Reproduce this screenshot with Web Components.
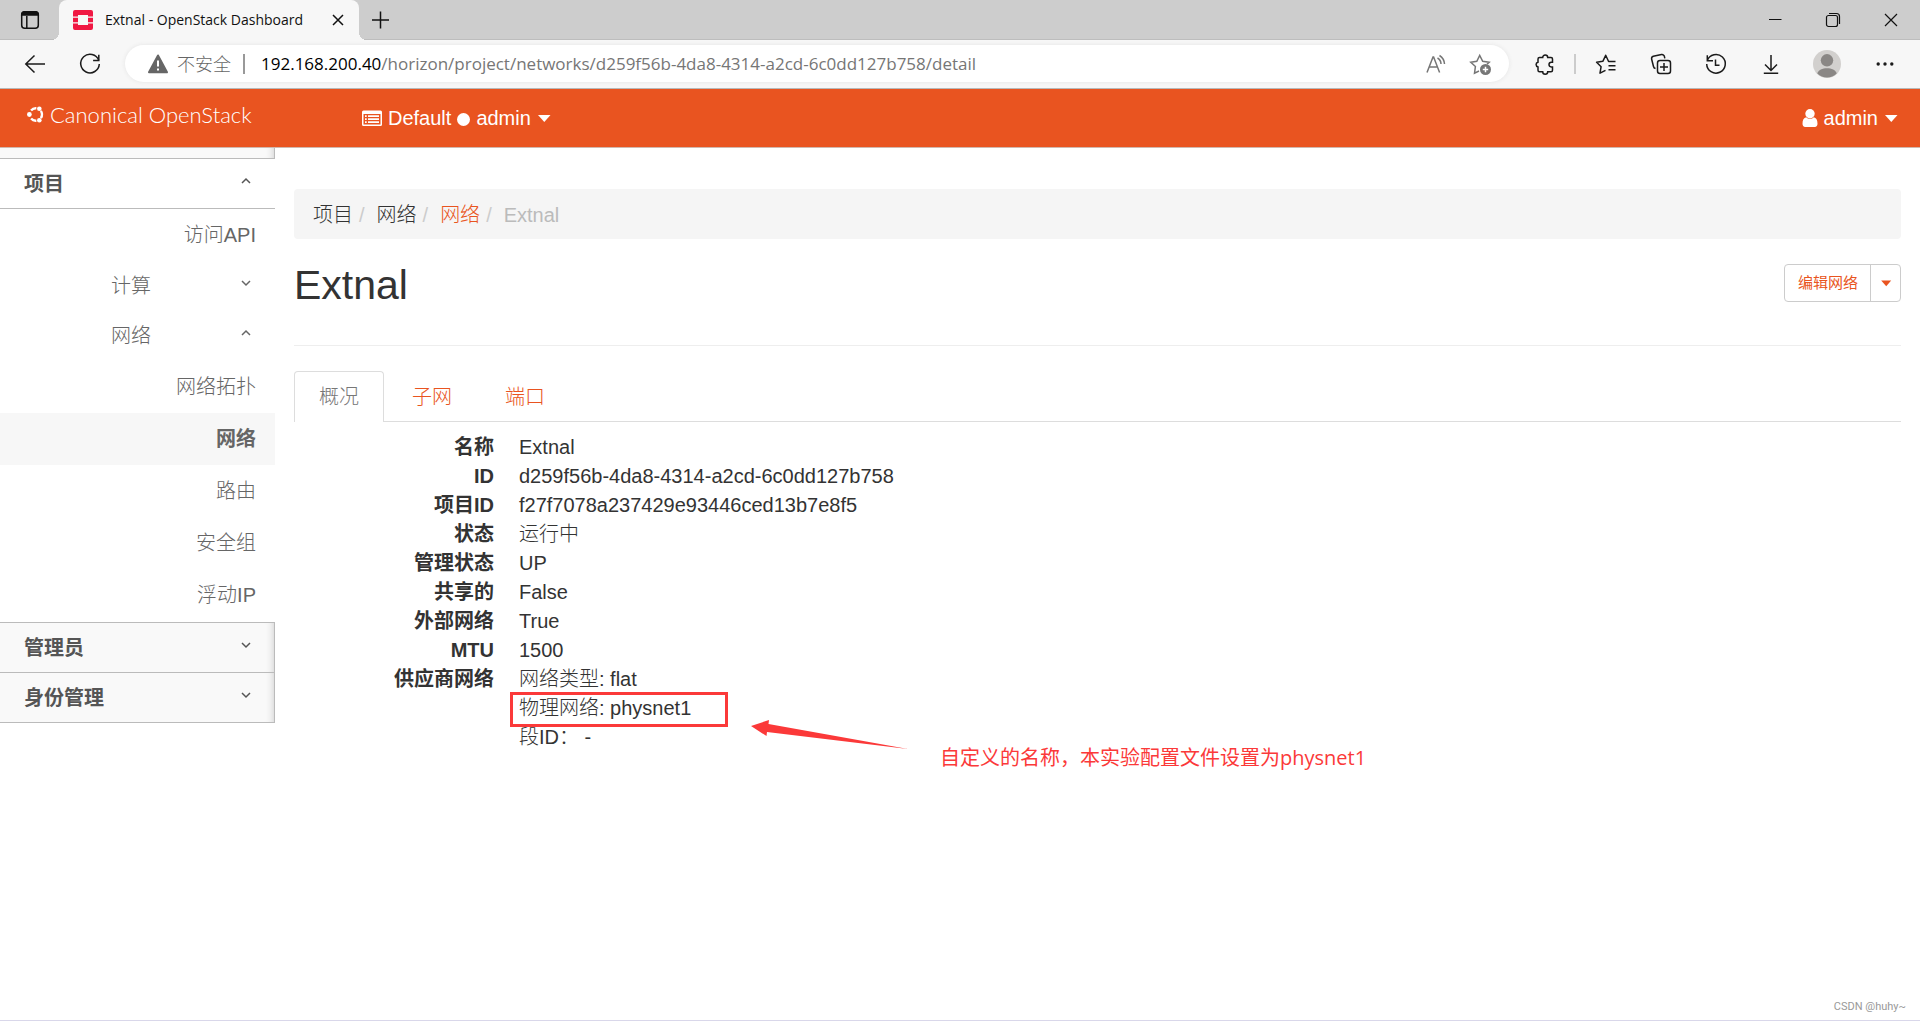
<!DOCTYPE html>
<html lang="zh-CN">
<head>
<meta charset="utf-8">
<title>Extnal - OpenStack Dashboard</title>
<style>
:root{
  --orange:#e95420; --ink:#333; --line:#ddd; --red:#fb3939;
  --body:"Liberation Sans","Noto Sans CJK SC",sans-serif;
  --chrome:"Open Sans","Noto Sans CJK SC",sans-serif;
}
html,body{margin:0;height:100%}
body{background:#fff;color:var(--ink);font:300 20px/29px var(--body)}
</style>
</head>
<body>
<dashboard-window>
  <browser-tabs slot="chrome" label="Extnal - OpenStack Dashboard"></browser-tabs>
  <browser-toolbar slot="chrome" host="192.168.200.40" path="/horizon/project/networks/d259f56b-4da8-4314-a2cd-6c0dd127b758/detail"></browser-toolbar>
  <horizon-header slot="header"></horizon-header>
  <side-nav slot="nav">
    <nav-section label="项目" open>
      <nav-item>访问API</nav-item>
      <nav-group>计算</nav-group>
      <nav-group open>网络</nav-group>
      <nav-item>网络拓扑</nav-item>
      <nav-item active>网络</nav-item>
      <nav-item>路由</nav-item>
      <nav-item>安全组</nav-item>
      <nav-item>浮动IP</nav-item>
    </nav-section>
    <nav-section label="管理员"></nav-section>
    <nav-section label="身份管理" last></nav-section>
  </side-nav>
  <bread-crumb></bread-crumb>
  <page-title name="Extnal" action="编辑网络"></page-title>
  <tab-list></tab-list>
  <network-details></network-details>
  <water-mark slot="mark">CSDN @huhy~</water-mark>
</dashboard-window>

<script>
const base = `<style>
:host,*{box-sizing:border-box}
:host{display:block}
a{color:inherit;text-decoration:none}
button{font:inherit;color:inherit;background:none;border:0;padding:0;margin:0;display:flex;align-items:center;justify-content:center}
svg{display:block;overflow:visible}
</style>`;
const define = (name, render) => customElements.define(name, class extends HTMLElement {
  constructor(){ super(); this.attachShadow({mode:'open'}); }
  connectedCallback(){ this.shadowRoot.innerHTML = base + render(this); }
});

/* Icons: line drawings on a 20 by 20 grid */
const icons = {
  tabs:`<rect x="1.7" y="1.7" width="16.6" height="16.6" rx="3"/><path d="M1.7 5V4.7a3 3 0 0 1 3-3h10.6a3 3 0 0 1 3 3V5z" fill="currentColor"/><path d="M6.8 6v12"/>`,
  close:`<path d="M5 5l10 10M15 5L5 15"/>`,
  plus:`<path d="M10.500 1.5v17M2 10h17"/>`,
  min:`<path d="M4 9.500h12.500"/>`,
  max:`<rect x="3.500" y="5.500" width="11" height="11" rx="2"/><path d="M6 3.500h7.500a3 3 0 0 1 3 3V14"/>`,
  winclose:`<path d="M4 4l12 12M16 4L4 16"/>`,
  back:`<path d="M20 10H.8M9.500 1.500L.8 10l8.700 8.500"/>`,
  reload:`<path d="M18.700 6.200A9.300 9.300 0 1 0 19.300 10"/><path d="M18.800 .8v5.700h-5.700"/>`,
  aloud:`<path d="M1 18.500L7 3h.6l6 15.500M3.200 13h8.300"/><path d="M11.500 4a7 7 0 0 1 3.500 6M13.500 1.500a11 11 0 0 1 5 8.500" />`,
  staradd:`<path d="M9 17l-4.500 2.200.9-6.700L.8 8.300l6-1L9.700 1.500l3 5.800 6.500 1-2.200 2"/><circle cx="15.500" cy="15.500" r="5.500" fill="currentColor" stroke="none"/><path d="M15.500 12.800v5.400M12.800 15.500h5.400" stroke="#fff"/>`,
  puzzle:`<path d="M4.500 3.500h3.200a2.500 2.500 0 0 1 5 0h3.300a1.500 1.500 0 0 1 1.500 1.500v3.300h-1.200a2.300 2.300 0 0 0 0 4.600h1.200v3.300a1.500 1.500 0 0 1-1.500 1.500h-3.300a2.500 2.500 0 0 1-5 0H4.500A1.500 1.500 0 0 1 3 16.200v-3.300a2.400 2.400 0 0 1 0-4.700V5a1.500 1.500 0 0 1 1.500-1.500z"/>`,
  starlist:`<path d="M19.500 7.500H12.600L9.700 1.300 6.800 7.300.6 8.300l4.500 4.400-1.100 6.500 5.500-2.900M12.500 11.700h7M12.500 15.800h7" stroke-linejoin="round"/>`,
  collect:`<rect x="6.500" y="6.500" width="13" height="13" rx="2.500"/><path d="M13 9v8M9 13h8M4.500 14.500A2.500 2.500 0 0 1 2.500 12.500L.6 5A2.500 2.500 0 0 1 2.300 2.300L10.500.6a2.500 2.500 0 0 1 3 2.200l.3 1.500"/>`,
  history:`<path d="M1.300 6.500A9.300 9.300 0 1 1 .7 10M1.300 1.200v5.500H7M9.500 5.500v5.700h4"/>`,
  download:`<path d="M10 1v15M4 10.500l6 6 6-6M2.800 19.300h14.400"/>`,
  dots:`<g fill="currentColor" stroke="none"><circle cx="3.200" cy="10" r="1.700"/><circle cx="10" cy="10" r="1.700"/><circle cx="16.800" cy="10" r="1.700"/></g>`,
  avatar:`<circle cx="10" cy="10" r="14" fill="#d2d0ce" stroke="none"/><circle cx="10" cy="6.300" r="6.200" fill="#8a8785" stroke="none"/><path d="M.3 19.600C2 12.500 18 12.500 19.700 19.600A14 14 0 0 1 .3 19.600z" fill="#8a8785" stroke="none"/>`,
  warn:`<path d="M10 1.500L19 18.300H1z" fill="currentColor" stroke-width="2" stroke-linejoin="round"/><path d="M10 6.500v6M10 14.500v2" stroke="#fff" stroke-width="2"/>`,
  favicon:`<path d="M2 0h16a2 2 0 0 1 2 2v4.500h-5V5H5v1.500H0V2a2 2 0 0 1 2-2zM0 7.800h5v4.400H0zM15 7.800h5v4.400h-5zM0 13.500h5V15h10v-1.500h5V18a2 2 0 0 1-2 2H2a2 2 0 0 1-2-2z" fill="#f01742" stroke="none"/>`,
  ubuntu:`<path d="M4.800 5.200A7.300 7.300 0 0 1 11 2.700M16.300 5.800A7.500 7.500 0 0 1 16.300 14.200M11 17.300A7.300 7.300 0 0 1 4.800 14.800" stroke-width="2.800"/><g fill="currentColor" stroke="none"><circle cx="2.800" cy="10" r="2.800"/><circle cx="14.500" cy="3.200" r="2.700"/><circle cx="14.500" cy="16.800" r="2.700"/></g>`,
  list:`<path fill="currentColor" stroke="none" fill-rule="evenodd" d="M1.500 2.500h17A1.500 1.500 0 0 1 20 4v12.500a1.500 1.500 0 0 1-1.500 1.500h-17A1.500 1.500 0 0 1 0 16.500V4a1.500 1.500 0 0 1 1.500-1.500zM1.500 6v10.500h17V6z"/><path d="M3 8.200h1.700M6 8.200h11M3 11.200h1.700M6 11.200h11M3 14.200h1.700M6 14.200h11" stroke-width="1.800"/>`,
  user:`<circle cx="10" cy="5.700" r="4.700" fill="currentColor" stroke="none"/><path d="M6.300 9.300C8 11.600 12 11.600 13.700 9.300c2.600.4 3.800 3 3.800 6.500 0 2-1 3.200-2.700 3.200H5.200c-1.700 0-2.700-1.200-2.700-3.200 0-3.500 1.200-6.100 3.800-6.500z" fill="currentColor" stroke="none"/>`,
  down:`<path d="M6 8l4 4 4-4"/>`,
  up:`<path d="M6 12l4-4 4 4"/>`,
  caret:`<path d="M4 7h12.500l-6.200 7z" fill="currentColor" stroke="none"/>`
};
define('ui-icon', el => `<style>
:host{flex:none;width:20px;height:20px}
svg{width:100%;height:100%;fill:none;stroke:currentColor;stroke-width:${el.getAttribute('weight')||'1.500'}}
</style><svg viewBox="0 0 20 20" aria-hidden="true">${icons[el.getAttribute('name')]}</svg>`);

define('dashboard-window', () => `<style>
:host{display:flex;flex-direction:column;min-height:100vh;position:relative;border-bottom:1px solid #d9d7ea}
.cols{display:flex;flex:1;align-items:flex-start}
main{flex:1;min-width:0;padding:41px 19px 0}
</style>
<slot name="chrome"></slot><slot name="header"></slot>
<div class="cols"><slot name="nav"></slot><main><slot></slot></main></div>
<slot name="mark"></slot>`);

define('browser-tabs', el => `<style>
:host{display:flex;height:40px;background:#cdcdcd;box-shadow:inset 0 -1px #bdbdbd;font:400 14px/20px var(--chrome);color:#111}
.side{width:59px}
.tab{position:relative;display:flex;align-items:center;width:300px;padding:0 11px 0 14px;gap:12px;background:#f7f7f7;border-radius:8px 8px 0 0;white-space:nowrap}
.tab::before,.tab::after{content:"";position:absolute;bottom:0;width:8px;height:8px}
.tab::before{right:100%;background:radial-gradient(circle at 0 0,transparent 8px,#f7f7f7 8px)}
.tab::after{left:100%;background:radial-gradient(circle at 100% 0,transparent 8px,#f7f7f7 8px)}
.label{flex:1}
.new{width:42px}
.win{display:flex;margin-left:auto}
.win button{width:58px}
</style>
<button class="side" aria-label="标签页"><ui-icon name="tabs"></ui-icon></button>
<div class="tab"><ui-icon name="favicon"></ui-icon><span class="label">${el.getAttribute('label')}</span><button aria-label="关闭标签页"><ui-icon name="close"></ui-icon></button></div>
<button class="new" aria-label="新标签页"><ui-icon name="plus"></ui-icon></button>
<div class="win">
<button aria-label="最小化"><ui-icon name="min" weight="1"></ui-icon></button>
<button aria-label="还原"><ui-icon name="max" weight="1.200"></ui-icon></button>
<button aria-label="关闭"><ui-icon name="winclose" weight="1.200"></ui-icon></button></div>`);

define('browser-toolbar', el => `<style>
:host{display:flex;height:49px;padding:5px 6px 6px 7px;background:#f7f7f7;border-bottom:1px solid #b8b8b8;font:400 18px/26px var(--chrome);color:#1b1b1b}
button{width:55px}
.wide{width:58px}
.bar{flex:1;min-width:0;display:flex;align-items:center;margin:0 8px;padding:0 7px 0 23px;background:#fff;border-radius:19px;box-shadow:0 0 4px #e4e4e4;color:#767676;white-space:nowrap}
.bar button{width:44px}
.bar ui-icon[name=warn]{color:#666}
.safe{margin-left:9px;color:#666;font-weight:300}
.rule{width:2px;height:20px;background:#999;margin:0 16px 0 12px}
b{font-weight:400;color:#000}
.url{flex:1;font-size:17px}
.sep{width:2px;height:20px;margin:auto 2px;background:#ccc}
</style>
<button aria-label="返回"><ui-icon name="back"></ui-icon></button>
<button aria-label="刷新"><ui-icon name="reload"></ui-icon></button>
<div class="bar"><ui-icon name="warn"></ui-icon><span class="safe">不安全</span><span class="rule"></span>
<span class="url"><b>${el.getAttribute('host')}</b>${el.getAttribute('path')}</span>
<button aria-label="朗读"><ui-icon name="aloud"></ui-icon></button><button aria-label="收藏"><ui-icon name="staradd"></ui-icon></button></div>
<button aria-label="扩展"><ui-icon name="puzzle"></ui-icon></button><span class="sep"></span>
<button aria-label="收藏夹"><ui-icon name="starlist"></ui-icon></button>
<button aria-label="集锦"><ui-icon name="collect"></ui-icon></button>
<button aria-label="历史记录"><ui-icon name="history"></ui-icon></button>
<button aria-label="下载"><ui-icon name="download"></ui-icon></button>
<button class="wide" aria-label="个人资料"><ui-icon name="avatar"></ui-icon></button>
<button class="wide" aria-label="更多"><ui-icon name="dots"></ui-icon></button>`);

define('horizon-header', () => `<style>
:host{display:flex;align-items:center;height:59px;background:var(--orange);border-bottom:1px solid #d0b8ae;color:#fff;padding:0 23px 0 27px}
.brand{display:flex;align-items:center;width:335px;gap:6px;padding-bottom:8px;font:300 22px/29px Lato,sans-serif}
.brand ui-icon{width:17px;height:17px}
.dot{width:13px;height:13px;border-radius:50%;background:#fff;margin:3px 6px 0}
.user{margin-left:auto}
ui-icon[name=list]{margin-right:6px}
ui-icon[name=user]{margin-right:4px}
ui-icon[name=caret]{margin-left:3px;margin-right:-4px}
</style>
<a class="brand" href="#"><ui-icon name="ubuntu"></ui-icon><span>Canonical OpenStack</span></a>
<button><ui-icon name="list"></ui-icon><span>Default</span><span class="dot"></span><span>admin</span><ui-icon name="caret"></ui-icon></button>
<button class="user"><ui-icon name="user"></ui-icon><span>admin</span><ui-icon name="caret"></ui-icon></button>`);

define('side-nav', () => `<style>
:host{width:275px;flex:none}
.cap{height:10px;background:#f9f9f9;box-shadow:inset -1px 0 #bbb,inset -9px 0 8px -8px #0003}
</style><div class="cap"></div><nav><slot></slot></nav>`);

define('nav-section', el => {
  const open = el.hasAttribute('open');
  return `<style>
button{width:100%;height:50px;padding:2px 19px 0 24px;justify-content:space-between;border-top:1px solid #bbb;font-weight:700;color:#555}
ui-icon{margin-bottom:8px}
.open{height:51px;border-bottom:1px solid #bbb}
.shut{background:#f9f9f9;box-shadow:inset -1px 0 #bbb,inset -9px 0 8px -8px #0003}
.last{height:51px;border-bottom:1px solid #bbb}
.items{padding-bottom:1px}
</style><button class="${open?'open':'shut'} ${el.hasAttribute('last')?'last':''}" aria-expanded="${open}"><span>${el.getAttribute('label')}</span><ui-icon name="${open?'up':'down'}"></ui-icon></button>
${open?'<div class="items"><slot></slot></div>':''}`;
});
define('nav-item', () => `<style>
:host([active]){background:#f7f7f7;font-weight:700}
a{display:block;padding:12px 19px 11px;text-align:right;color:#666}
</style><a href="#"><slot></slot></a>`);
define('nav-group', el => `<style>
button{width:100%;height:50px;padding:1px 19px 0 111px;justify-content:space-between;color:#666}
ui-icon{margin-bottom:8px}
</style><button><slot></slot><ui-icon name="${el.hasAttribute('open')?'up':'down'}"></ui-icon></button>`);

define('bread-crumb', () => `<style>
ol{display:flex;list-style:none;margin:0;padding:12px 19px 9px;background:#f5f5f5;border-radius:4px}
li+li::before{content:"/";color:#ccc;padding:0 12px 0 6px}
.link{color:var(--orange)}
.now{color:#bbb}
</style><nav aria-label="路径"><ol><li>项目</li><li>网络</li><li><a class="link" href="#">网络</a></li><li class="now">Extnal</li></ol></nav>`);

define('page-title', el => `<style>
:host{display:flex;justify-content:space-between;align-items:flex-start;padding:25px 0 39px;border-bottom:1px solid #eee}
h1{margin:0;font-size:41px;line-height:42px;font-weight:400}
.group{display:flex;height:38px;border:1px solid #ccc;border-radius:4px;color:var(--orange);font-size:15px;line-height:20px}
.edit{padding:0 12px 1px 13px;font-weight:400}
.more{width:30px;border-left:1px solid #ccc}
.more ui-icon{width:16px;height:16px}
</style><h1>${el.getAttribute('name')}</h1>
<div class="group"><button class="edit">${el.getAttribute('action')}</button><button class="more" aria-label="更多操作"><ui-icon name="caret"></ui-icon></button></div>`);

define('tab-list', () => `<style>
ul{display:flex;gap:3px;list-style:none;margin:25px 0 0;padding:0;border-bottom:1px solid var(--line)}
a{display:block;padding:11px 24px 9px;border:1px solid transparent;border-bottom:0;color:var(--orange)}
.on{margin-bottom:-1px;background:#fff;border-color:var(--line);border-radius:4px 4px 0 0;color:#777;padding-bottom:10px}
</style><ul><li><a class="on" href="#">概况</a></li><li><a href="#">子网</a></li><li><a href="#">端口</a></li></ul>`);

define('network-details', () => {
  const rows = [['名称','Extnal'],['ID','d259f56b-4da8-4314-a2cd-6c0dd127b758'],['项目ID','f27f7078a237429e93446ced13b7e8f5'],['状态','运行中'],['管理状态','UP'],['共享的','False'],['外部网络','True'],['MTU','1500'],['供应商网络','网络类型: flat']];
  return `<style>
dl{display:grid;grid-template-columns:200px 1fr;column-gap:25px;margin:11px 0 0}
dt{text-align:right;font-weight:700}
dd{margin:0;grid-column:2}
.mark{position:relative}
.box{position:absolute;left:-9px;top:-2px;width:218px;height:35px;border:3px solid var(--red)}
svg{position:absolute;left:232px;top:26px;width:158px;height:30px;fill:var(--red)}
.note{position:absolute;left:421px;top:49px;color:var(--red);font:400 20px/29px var(--chrome);white-space:nowrap}
</style><dl>${rows.map(([k,v])=>`<dt>${k}</dt><dd>${v}</dd>`).join('')}
<dd class="mark">物理网络: physnet1<span class="box"></span>
<svg viewBox="0 0 158 30" aria-hidden="true"><path d="M0 6L18 0 17.500 4 157 29 16 12 15.500 16z"/></svg>
<span class="note">自定义的名称，本实验配置文件设置为physnet1</span></dd>
<dd>段ID： -</dd></dl>`;
});

define('water-mark', () => `<style>
:host{position:absolute;right:14px;bottom:5px;font:400 11px/16px Roboto,sans-serif;color:#999}
</style><slot></slot>`);
</script>
</body>
</html>
